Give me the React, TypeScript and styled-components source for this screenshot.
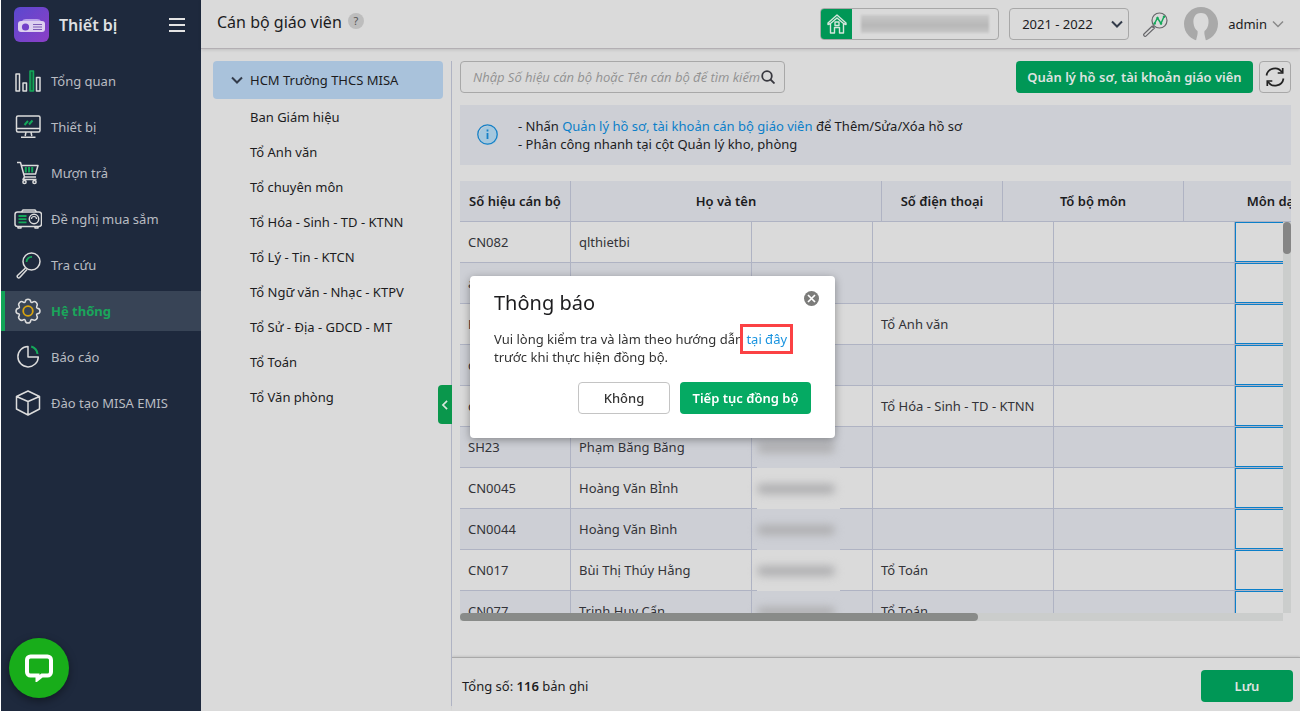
import React from "react";
import styled, { createGlobalStyle } from "styled-components";

const c = {
  navy: "#1e293d",
  navyActive: "#384456",
  page: "#dadada",
  stripe: "#cdcfd5",
  line: "#afb3c3",
  frame: "#a8a8a8",
  green: "#009756",
  blue: "#0b7fc9",
  text: "#1c1c1e",
};

const GlobalStyle = createGlobalStyle`
  *, *::before, *::after { box-sizing: border-box; }
  body {
    margin: 0;
    background: #fff;
    color: ${c.text};
    font: 13px/18px "Noto Sans", "Open Sans", sans-serif;
  }
  button, input, select { font: inherit; color: inherit; }
  button { cursor: pointer; }
`;

const Shell = styled.div`
  display: flex;
  height: 100vh;
  padding: 0 0 1px 1px;
`;

/* Sidebar */
const Sidebar = styled.aside`
  display: flex;
  flex-direction: column;
  flex: 0 0 200px;
  gap: 12px;
  background: ${c.navy};
`;

const Brand = styled.div`
  display: flex;
  align-items: center;
  gap: 10px;
  height: 49px;
  padding: 0 16px 0 13px;
`;

const BrandName = styled.strong`
  flex: 1;
  color: #dfe0e2;
  font-size: 16px;
  font-weight: 600;
`;

const PlainButton = styled.button`
  display: flex;
  align-items: center;
  justify-content: center;
  padding: 0;
  border: 0;
  background: none;
`;

const Nav = styled.nav`
  display: flex;
  flex-direction: column;
  gap: 6px;
`;

const NavItem = styled.a<{ $active?: boolean }>`
  display: flex;
  align-items: center;
  gap: 9px;
  height: 40px;
  padding-left: 9px;
  border-left: 4px solid ${(p) => (p.$active ? "#12a457" : "transparent")};
  background: ${(p) => (p.$active ? c.navyActive : "transparent")};
  color: ${(p) => (p.$active ? "#1aa65b" : "#b9bcc2")};
  font-weight: ${(p) => (p.$active ? 700 : 400)};
  text-decoration: none;

  svg { flex: 0 0 28px; }
`;

const ChatButton = styled.button`
  position: fixed;
  bottom: 14px;
  left: 9px;
  display: flex;
  align-items: center;
  justify-content: center;
  width: 60px;
  height: 60px;
  padding: 0;
  border: 0;
  border-radius: 50%;
  background: #18ad1a;
  box-shadow: 0 3px 8px rgba(0, 0, 0, 0.4);
`;

/* Main area */
const Main = styled.div`
  display: flex;
  flex: 1;
  flex-direction: column;
  min-width: 0;
  background: ${c.page};
`;

const TopBar = styled.header`
  display: flex;
  align-items: center;
  gap: 10px;
  flex: 0 0 49px;
  padding: 0 16px;
  border-bottom: 1px solid #b3afb3;
  box-shadow: 0 1px 3px rgba(0, 0, 0, 0.12);
`;

const PageTitle = styled.h1`
  margin: 0 -4px 4px 0;
  font-size: 16px;
  font-weight: 400;
  line-height: 22px;
`;

const HelpButton = styled.button`
  width: 16px;
  height: 16px;
  margin: 0 auto 6px 0;
  padding: 0;
  border: 0;
  border-radius: 50%;
  background: #bdbdbd;
  color: #555;
  font-size: 11px;
  line-height: 16px;
`;

const SchoolBox = styled.div`
  display: flex;
  align-items: center;
  width: 179px;
  height: 32px;
  border: 1px solid ${c.frame};
  border-radius: 4px;
  overflow: hidden;
`;

const HomeBadge = styled.span`
  display: flex;
  align-items: center;
  justify-content: center;
  width: 31px;
  height: 32px;
  background: ${c.green};
`;

const SchoolSmudge = styled.span`
  flex: 1;
  height: 18px;
  margin: 0 9px;
  background: linear-gradient(#c9c9c9, #bdbdbd 40%, #b8b8b8 60%, #c8c8c8);
  filter: blur(1px);
`;

const YearPicker = styled.label`
  position: relative;
  display: block;

  svg {
    position: absolute;
    top: 10px;
    right: 6px;
    pointer-events: none;
  }
`;

const YearSelect = styled.select`
  width: 120px;
  height: 32px;
  padding: 0 12px;
  border: 1px solid ${c.frame};
  border-radius: 4px;
  background: transparent;
  appearance: none;
`;

const UserButton = styled.button`
  display: flex;
  align-items: center;
  margin-left: 6px;
  padding: 0;
  border: 0;
  background: none;
`;

const UserName = styled.span`
  margin: 0 5px 0 10px;
`;

const LookupButton = styled(PlainButton)`
  margin-left: 4px;
`;

const Workspace = styled.div`
  display: flex;
  flex: 1;
  min-height: 0;
`;

const TreePanel = styled.aside`
  position: relative;
  flex: 0 0 251px;
  margin: 12px 0 5px;
  padding: 0 8px 0 12px;
  border-right: 1px solid ${c.line};
`;

const TreeRoot = styled.button`
  display: flex;
  align-items: center;
  gap: 7px;
  width: 100%;
  height: 38px;
  margin-bottom: 1px;
  padding: 0 18px;
  border: 0;
  border-radius: 4px;
  background: #a9c2db;
`;

const TreeList = styled.ul`
  margin: 0;
  padding: 0;
  list-style: none;
`;

const TreeItem = styled.li`
  height: 35px;
  padding-left: 37px;
  line-height: 35px;
`;

const CollapseHandle = styled.button`
  position: absolute;
  top: 324px;
  right: -1px;
  display: flex;
  align-items: center;
  justify-content: center;
  width: 14px;
  height: 39px;
  padding: 0;
  border: 0;
  border-radius: 4px 0 0 4px;
  background: #0a974c;
`;

const Panel = styled.main`
  display: flex;
  flex: 1;
  flex-direction: column;
  min-width: 0;
`;

const PanelBody = styled.section`
  display: flex;
  flex: 1;
  flex-direction: column;
  min-height: 0;
  padding: 12px 9px 36px 8px;
`;

const Toolbar = styled.div`
  display: flex;
  align-items: center;
  gap: 6px;
  margin-bottom: 12px;
`;

const SearchBox = styled.form`
  display: flex;
  align-items: center;
  width: 325px;
  height: 32px;
  margin-right: auto;
  padding: 0 9px 0 12px;
  border: 1px solid ${c.frame};
  border-radius: 4px;
`;

const SearchInput = styled.input`
  flex: 1;
  min-width: 0;
  padding: 0;
  border: 0;
  outline: 0;
  background: none;

  &::placeholder {
    color: #929292;
    font-family: "Open Sans", "Noto Sans", sans-serif;
    font-style: italic;
    opacity: 1;
  }
`;

const PrimaryButton = styled.button<{ $width: number; $bright?: boolean }>`
  width: ${(p) => p.$width}px;
  height: 32px;
  padding: 0;
  border: 0;
  border-radius: 4px;
  background: ${(p) => (p.$bright ? "#05aa63" : c.green)};
  color: ${(p) => (p.$bright ? "#fff" : "#dfe3e0")};
  font-weight: 600;
  white-space: nowrap;
`;

const RefreshButton = styled(PlainButton)`
  width: 32px;
  height: 32px;
  border: 1px solid ${c.frame};
  border-radius: 4px;
`;

const Notice = styled.div`
  display: flex;
  align-items: center;
  gap: 19px;
  height: 60px;
  margin-bottom: 16px;
  padding: 0 16px;
  background: ${c.stripe};

  p { margin: 0; }
`;

const TextLink = styled.a`
  color: ${c.blue};
  text-decoration: none;
`;

/* Data grid */
const Grid = styled.div`
  display: flex;
  flex: 1;
  flex-direction: column;
  min-height: 0;
`;

const Clip = styled.div`
  flex: 1;
  min-width: 0;
  overflow: hidden;
`;

const HeadClip = styled.div`
  flex: 0 0 41px;
  overflow: hidden;
  background: ${c.stripe};
`;

const Table = styled.table<{ $width: number }>`
  width: ${(p) => p.$width}px;
  border-spacing: 0;
  table-layout: fixed;
`;

const HeadCell = styled.th`
  height: 41px;
  padding: 0;
  border-right: 1px solid ${c.line};
  border-bottom: 1px solid ${c.line};
  font-weight: 600;
  white-space: nowrap;
`;

const Scroller = styled.div`
  display: flex;
  flex: 1;
  min-height: 0;
`;

const Row = styled.tr`
  --row: ${c.page};
  &:nth-child(even) { --row: ${c.stripe}; }
  background: var(--row);
`;

const Cell = styled.td`
  position: relative;
  height: 41px;
  padding: 0 8px;
  border-right: 1px solid ${c.line};
  border-bottom: 1px solid ${c.line};
  color: #333338;
  white-space: nowrap;
`;

const EditCell = styled(Cell)`
  padding: 0;
  background: ${c.page};
`;

const CellInput = styled.input`
  display: block;
  width: 100%;
  height: 40px;
  padding: 0 8px;
  border: 1px solid ${c.blue};
  outline: 0;
  background: ${c.page};
`;

const PhoneSmudge = styled.span`
  position: absolute;
  inset: 0 32px -1px 5px;
  z-index: 1;
  display: flex;
  align-items: center;
  background: var(--row);

  &::before {
    content: "";
    width: 78px;
    height: 10px;
    border-radius: 5px;
    background: #aeaeb0;
    filter: blur(4px);
  }
`;

const VTrack = styled.div`
  flex: 0 0 8px;
  background: #cbcdcc;
`;

const VThumb = styled.div`
  height: 32px;
  border-radius: 4px;
  background: #858585;
`;

const HTrack = styled.div`
  flex: 0 0 8px;
  margin-right: 8px;
  background: #cbcdcc;
`;

const HThumb = styled.div`
  width: 63%;
  height: 8px;
  border-radius: 4px;
  background: #898b89;
`;

const Footer = styled.footer`
  display: flex;
  align-items: center;
  justify-content: space-between;
  flex: 0 0 54px;
  padding: 2px 7px 0 10px;
  border-top: 1px solid #a9a9a9;
  box-shadow: 0 -1px 2px rgba(0, 0, 0, 0.1);

  strong { font-weight: 600; }
`;

/* Dialog */
const DialogLayer = styled.div`
  position: fixed;
  inset: 0;
  z-index: 5;
  display: flex;
  align-items: center;
  justify-content: center;
  padding: 2px 0 0 5px;
`;

const Dialog = styled.div`
  width: 365px;
  padding: 13px 24px 24px;
  border-radius: 4px;
  background: #fff;
  box-shadow: 0 2px 8px rgba(0, 0, 0, 0.35);
`;

const DialogHead = styled.div`
  display: flex;
  align-items: flex-start;
  justify-content: space-between;
  margin-bottom: 13px;
`;

const DialogTitle = styled.h2`
  margin: 0;
  font-size: 20px;
  font-weight: 400;
  line-height: 28px;
`;

const CloseButton = styled(PlainButton)`
  margin: 2px -8px 0 0;
`;

const DialogText = styled.p`
  margin: 0 -8px 16px 0;
  color: #333;
`;

const MarkedLink = styled(TextLink)`
  position: relative;
  color: #1a94e0;

  &::after {
    content: "";
    position: absolute;
    inset: -6px -6px;
    border: 3px solid #fb4144;
  }
`;

const DialogActions = styled.div`
  display: flex;
  justify-content: flex-end;
  gap: 10px;
`;

const SecondaryButton = styled.button`
  width: 92px;
  height: 32px;
  padding: 0;
  border: 1px solid #c4c4c4;
  border-radius: 4px;
  background: #fff;
  color: #333;
  font-weight: 500;
`;

/* Icons */
const Chevron = ({ color = "#333b4a", size = 12, width = 2, d = "M1 3.5 6 8.5 11 3.5" }) => (
  <svg width={size} height={size} viewBox="0 0 12 12" fill="none" stroke={color} strokeWidth={width} aria-hidden="true">
    <path d={d} />
  </svg>
);

const NavSvg = ({ children }: { children: React.ReactNode }) => (
  <svg width="28" height="28" viewBox="0 0 28 28" fill="none" stroke="#dcdcdc" strokeWidth="1.5" strokeLinejoin="round" aria-hidden="true">
    {children}
  </svg>
);

const G = "#14a85a";

const icons = {
  chart: (
    <NavSvg>
      <path d="M2 7h3.500v17H2zM9 16h3.500v8H9zM22.500 10.500H26V24h-3.500z" />
      <path d="M16 4h3.500v20H16z" stroke={G} fill="#12603f" />
    </NavSvg>
  ),
  monitor: (
    <NavSvg>
      <rect x="2.500" y="3" width="23.500" height="16" rx="1.500" />
      <path d="M2.500 15.500H26M12 19l-.8 4M17 19l.8 4M7 24.200h14.500" />
      <path d="m10.500 12 3.500-4M15 11.500l3.500-4" stroke={G} strokeWidth="2" />
    </NavSvg>
  ),
  cart: (
    <NavSvg>
      <path d="M3 3.500h3.500L10.500 18H22M7.500 6.500H24L21.500 15H9.800M10.500 18 9 20.500h13.500" />
      <circle cx="10.500" cy="23" r="1.600" />
      <circle cx="20.500" cy="23" r="1.600" />
      <path d="M11.800 8v5.500M15 8v5.500M18.200 8v5.500" stroke={G} strokeWidth="2" />
    </NavSvg>
  ),
  projector: (
    <NavSvg>
      <rect x="1" y="7" width="26.500" height="14.500" rx="2.500" />
      <path d="M7.500 7 9 5h12l1.500 2M4 21.500V23h3v-1.500M21 21.500V23h3v-1.500" />
      <circle cx="20" cy="14" r="4.700" />
      <path d="M17.500 14a2.500 2.500 0 0 1 5 0" strokeWidth="1.200" />
      <path d="M4.500 11h8M4.500 14.200h8M4.500 17.400h8" stroke={G} strokeWidth="1.800" />
    </NavSvg>
  ),
  lens: (
    <NavSvg>
      <circle cx="17.500" cy="10.500" r="8.500" />
      <path d="m11.500 17-8 7.500a1.500 1.500 0 0 0 2.200 2L13 18.500" />
      <path d="M12.500 11a5 5 0 0 1 5.500-5" stroke={G} strokeWidth="1.800" />
    </NavSvg>
  ),
  gear: (
    <NavSvg>
      <path d="M11.200 4.800Q11.500 2.200 14 2.200T16.800 4.800Q17.300 5.800 18.400 5.300Q20.500 3.700 22.300 5.600T22.700 9.500Q22.200 10.700 23.300 11.200Q26 11.500 26 14T23.300 16.800Q22.200 17.300 22.700 18.400Q24.200 20.500 22.400 22.300T18.500 22.700Q17.300 22.200 16.800 23.300Q16.500 26 14 26T11.200 23.300Q10.700 22.200 9.500 22.700Q7.500 24.200 5.600 22.400T5.300 18.500Q5.800 17.300 4.700 16.800Q2 16.500 2 14T4.700 11.200Q5.800 10.700 5.300 9.500Q3.800 7.500 5.600 5.600T9.500 5.300Q10.700 5.800 11.200 4.800Z" />
      <circle cx="14" cy="14" r="4.800" stroke="#d9a40f" strokeWidth="1.800" />
    </NavSvg>
  ),
  pie: (
    <NavSvg>
      <path d="M14 3.500A10.200 10.200 0 1 0 24.300 14H14z" />
      <path d="M17.200 3.500A9 9 0 0 1 23.500 11" stroke={G} strokeWidth="2" />
    </NavSvg>
  ),
  box: (
    <NavSvg>
      <path d="M14 2 25.500 7.500V20L14 26 2.500 20V7.500zM2.500 7.500 14 12.500l11.500-5M14 12.500V26" />
    </NavSvg>
  ),
};

const BrandLogo = () => (
  <svg width="35" height="35" viewBox="0 0 35 35" aria-hidden="true">
    <defs>
      <linearGradient id="brand" x1="0" y1="0" x2="1" y2="1">
        <stop offset="0" stopColor="#5a48cf" />
        <stop offset="1" stopColor="#8c3fc6" />
      </linearGradient>
    </defs>
    <rect width="35" height="35" rx="6" fill="url(#brand)" />
    <path d="M8 14q1-2 4-2h11q3 0 4 2z" fill="#b8a0e8" />
    <rect x="4" y="14" width="27" height="11" rx="3" fill="#ddd0f0" />
    <circle cx="11.500" cy="20" r="3.600" fill="#7340c9" />
    <path d="M19 17.500h9M19 20h9M19 22.500h9" stroke="#7d5bb5" strokeWidth="1" />
  </svg>
);

const navItems: { label: string; icon: React.ReactNode; active?: boolean }[] = [
  { label: "Tổng quan", icon: icons.chart },
  { label: "Thiết bị", icon: icons.monitor },
  { label: "Mượn trả", icon: icons.cart },
  { label: "Đề nghị mua sắm", icon: icons.projector },
  { label: "Tra cứu", icon: icons.lens },
  { label: "Hệ thống", icon: icons.gear, active: true },
  { label: "Báo cáo", icon: icons.pie },
  { label: "Đào tạo MISA EMIS", icon: icons.box },
];

const groups = [
  "Ban Giám hiệu",
  "Tổ Anh văn",
  "Tổ chuyên môn",
  "Tổ Hóa - Sinh - TD - KTNN",
  "Tổ Lý - Tin - KTCN",
  "Tổ Ngữ văn - Nhạc - KTPV",
  "Tổ Sử - Địa - GDCD - MT",
  "Tổ Toán",
  "Tổ Văn phòng",
];

const rows = [
  { code: "CN082", name: "qlthietbi", group: "" },
  { code: "a", name: "", group: "" },
  { code: "H", name: "", group: "Tổ Anh văn" },
  { code: "c", name: "", group: "" },
  { code: "c", name: "", group: "Tổ Hóa - Sinh - TD - KTNN" },
  { code: "SH23", name: "Phạm Băng Băng", group: "", phone: true },
  { code: "CN0045", name: "Hoàng Văn BÌnh", group: "", phone: true },
  { code: "CN0044", name: "Hoàng Văn Bình", group: "", phone: true },
  { code: "CN017", name: "Bùi Thị Thúy Hằng", group: "Tổ Toán", phone: true },
  { code: "CN077", name: "Trịnh Huy Cẩn", group: "Tổ Toán", phone: true },
];

const headColumns = [
  { label: "Số hiệu cán bộ", width: 111 },
  { label: "Họ và tên", width: 311 },
  { label: "Số điện thoại", width: 121 },
  { label: "Tổ bộ môn", width: 181 },
  { label: "Môn dạy", width: 181 },
];
const bodyColumns = [111, 181, 121, 181, 181, 181];

const sum = (values: number[]) => values.reduce((a, b) => a + b, 0);

export default function App() {
  return (
    <>
      <GlobalStyle />
      <Shell>
        <Sidebar>
          <Brand>
            <BrandLogo />
            <BrandName>Thiết bị</BrandName>
            <PlainButton aria-label="Menu">
              <svg width="16" height="14" viewBox="0 0 16 14" stroke="#e4e4e4" strokeWidth="2" aria-hidden="true">
                <path d="M0 1h16M0 7h16M0 13h16" />
              </svg>
            </PlainButton>
          </Brand>
          <Nav>
            {navItems.map((item) => (
              <NavItem key={item.label} href="#" $active={item.active}>
                {item.icon}
                {item.label}
              </NavItem>
            ))}
          </Nav>
        </Sidebar>

        <Main>
          <TopBar>
            <PageTitle>Cán bộ giáo viên</PageTitle>
            <HelpButton aria-label="Trợ giúp">?</HelpButton>
            <SchoolBox>
              <HomeBadge>
                <svg width="20" height="20" viewBox="0 0 20 20" fill="none" stroke="#d5e6dc" strokeWidth="1.400" strokeLinejoin="round" aria-hidden="true">
                  <path d="M3.500 9.500 1 10.500 1 9l9-8 9 8v1.500l-2.500-1V19h-4v-5.500h-5V19h-4zM3.500 9.500 10 4l6.500 5.500" />
                  <rect x="8" y="8" width="4" height="3.500" />
                </svg>
              </HomeBadge>
              <SchoolSmudge />
            </SchoolBox>
            <YearPicker>
              <YearSelect aria-label="Năm học" defaultValue="2021 - 2022">
                <option>2021 - 2022</option>
              </YearSelect>
              <Chevron />
            </YearPicker>
            <LookupButton aria-label="Tra cứu nhanh">
              <svg width="25" height="25" viewBox="0 0 25 25" fill="none" stroke="#66666a" strokeWidth="1.200" aria-hidden="true">
                <circle cx="16.500" cy="8.500" r="7.500" />
                <path d="m10.800 14-1.500 1.500M9.300 14 1.200 21.700a1.400 1.400 0 0 0 2 2.200L11.500 16z" />
                <path d="m11.500 11.500 3-5.500 3.500 5.500 3-7" stroke="#14a85a" strokeWidth="1.500" />
                <g fill="#14a85a" stroke="none">
                  <circle cx="11.700" cy="11.500" r="1.200" />
                  <circle cx="14.500" cy="6" r="1.200" />
                  <circle cx="18" cy="11.500" r="1.200" />
                  <circle cx="21" cy="4.800" r="1.200" />
                </g>
              </svg>
            </LookupButton>
            <UserButton>
              <svg width="34" height="34" viewBox="0 0 34 34" aria-hidden="true">
                <circle cx="17" cy="17" r="17" fill="#a9a9a9" />
                <path d="M17 6C11 6 9 11 9.500 16c.3 4 2 6.500 4 8 .5 3-.5 5-1.500 10h10c-1-5-2-7-1.500-10 2-1.500 3.700-4 4-8C25 11 23 6 17 6z" fill="#dadada" />
              </svg>
              <UserName>admin</UserName>
              <Chevron color="#8a8a8a" width={1.5} />
            </UserButton>
          </TopBar>

          <Workspace>
            <TreePanel>
              <TreeRoot>
                <Chevron />
                HCM Trường THCS MISA
              </TreeRoot>
              <TreeList>
                {groups.map((g) => (
                  <TreeItem key={g}>{g}</TreeItem>
                ))}
              </TreeList>
              <CollapseHandle aria-label="Thu gọn">
                <Chevron color="#d8e8dd" size={10} d="M8.500 1 3.500 6 8.500 11" />
              </CollapseHandle>
            </TreePanel>

            <Panel>
              <PanelBody>
                <Toolbar>
                  <SearchBox>
                    <SearchInput aria-label="Tìm kiếm" placeholder="Nhập Số hiệu cán bộ hoặc Tên cán bộ để tìm kiếm" />
                    <PlainButton type="button" aria-label="Tìm">
                      <svg width="14" height="14" viewBox="0 0 14 14" fill="none" stroke="#38383f" strokeWidth="1.800" aria-hidden="true">
                        <circle cx="6" cy="6" r="4.800" />
                        <path d="m9.500 9.500 4 4" />
                      </svg>
                    </PlainButton>
                  </SearchBox>
                  <PrimaryButton $width={237}>Quản lý hồ sơ, tài khoản giáo viên</PrimaryButton>
                  <RefreshButton aria-label="Tải lại">
                    <svg width="20" height="20" viewBox="0 0 20 20" fill="none" stroke="#222" strokeWidth="1.700" aria-hidden="true">
                      <path d="M1.500 8.500A8.500 8.500 0 0 1 17 5.200M18.500 11.500A8.500 8.500 0 0 1 3 14.800" />
                      <path d="M17.700 1v5h-5M2.300 19v-5h5" />
                    </svg>
                  </RefreshButton>
                </Toolbar>

                <Notice>
                  <svg width="23" height="23" viewBox="0 0 23 23" fill="none" aria-hidden="true">
                    <circle cx="12.500" cy="11.500" r="9.500" fill="#a5c8de" />
                    <circle cx="11.500" cy="10.500" r="9.700" stroke="#1580c6" strokeWidth="1.300" />
                    <path d="M11.500 9v6M11.500 5.500v2" stroke="#1580c6" strokeWidth="1.800" />
                  </svg>
                  <div>
                    <p>
                      - Nhấn <TextLink href="#">Quản lý hồ sơ, tài khoản cán bộ giáo viên</TextLink> để Thêm/Sửa/Xóa hồ sơ
                    </p>
                    <p>- Phân công nhanh tại cột Quản lý kho, phòng</p>
                  </div>
                </Notice>

                <Grid>
                  <HeadClip>
                    <Table $width={sum(headColumns.map((h) => h.width))}>
                      <colgroup>
                        {headColumns.map((h) => (
                          <col key={h.label} width={h.width} />
                        ))}
                      </colgroup>
                      <thead>
                        <tr>
                          {headColumns.map((h) => (
                            <HeadCell key={h.label} scope="col">
                              {h.label}
                            </HeadCell>
                          ))}
                        </tr>
                      </thead>
                    </Table>
                  </HeadClip>
                  <Scroller>
                    <Clip>
                      <Table $width={sum(bodyColumns)}>
                        <colgroup>
                          {bodyColumns.map((w, i) => (
                            <col key={i} width={w} />
                          ))}
                        </colgroup>
                        <tbody>
                          {rows.map((r, i) => (
                            <Row key={i}>
                              <Cell>{r.code}</Cell>
                              <Cell>{r.name}</Cell>
                              <Cell>{r.phone && <PhoneSmudge />}</Cell>
                              <Cell>{r.group}</Cell>
                              <Cell />
                              <EditCell>
                                <CellInput aria-label={`Môn dạy ${r.code}`} />
                              </EditCell>
                            </Row>
                          ))}
                        </tbody>
                      </Table>
                    </Clip>
                    <VTrack>
                      <VThumb />
                    </VTrack>
                  </Scroller>
                  <HTrack>
                    <HThumb />
                  </HTrack>
                </Grid>
              </PanelBody>
              <Footer>
                <span>
                  Tổng số: <strong>116</strong> bản ghi
                </span>
                <PrimaryButton $width={92}>Lưu</PrimaryButton>
              </Footer>
            </Panel>
          </Workspace>
        </Main>
      </Shell>

      <ChatButton aria-label="Trò chuyện">
        <svg width="28" height="28" viewBox="0 0 28 28" fill="none" aria-hidden="true">
          <path d="M5.500 2.500h17a3.500 3.500 0 0 1 3.500 3.500v12a3.500 3.500 0 0 1-3.500 3.500H17l-4.500 3.500v-3.500h-7A3.500 3.500 0 0 1 2 18V6a3.500 3.500 0 0 1 3.500-3.500z" stroke="#fff" strokeWidth="4" />
        </svg>
      </ChatButton>

      <DialogLayer>
        <Dialog role="dialog" aria-labelledby="dialog-title">
          <DialogHead>
            <DialogTitle id="dialog-title">Thông báo</DialogTitle>
            <CloseButton aria-label="Đóng">
              <svg width="15" height="15" viewBox="0 0 15 15" aria-hidden="true">
                <circle cx="7.500" cy="7.500" r="7.500" fill="#7c7c7a" />
                <path d="m4 4 7 7M11 4l-7 7" stroke="#fff" strokeWidth="1.700" />
              </svg>
            </CloseButton>
          </DialogHead>
          <DialogText>
            Vui lòng kiểm tra và làm theo hướng dẫn <MarkedLink href="#">tại đây</MarkedLink>
            <br />
            trước khi thực hiện đồng bộ.
          </DialogText>
          <DialogActions>
            <SecondaryButton>Không</SecondaryButton>
            <PrimaryButton $width={131} $bright>
              Tiếp tục đồng bộ
            </PrimaryButton>
          </DialogActions>
        </Dialog>
      </DialogLayer>
    </>
  );
}
